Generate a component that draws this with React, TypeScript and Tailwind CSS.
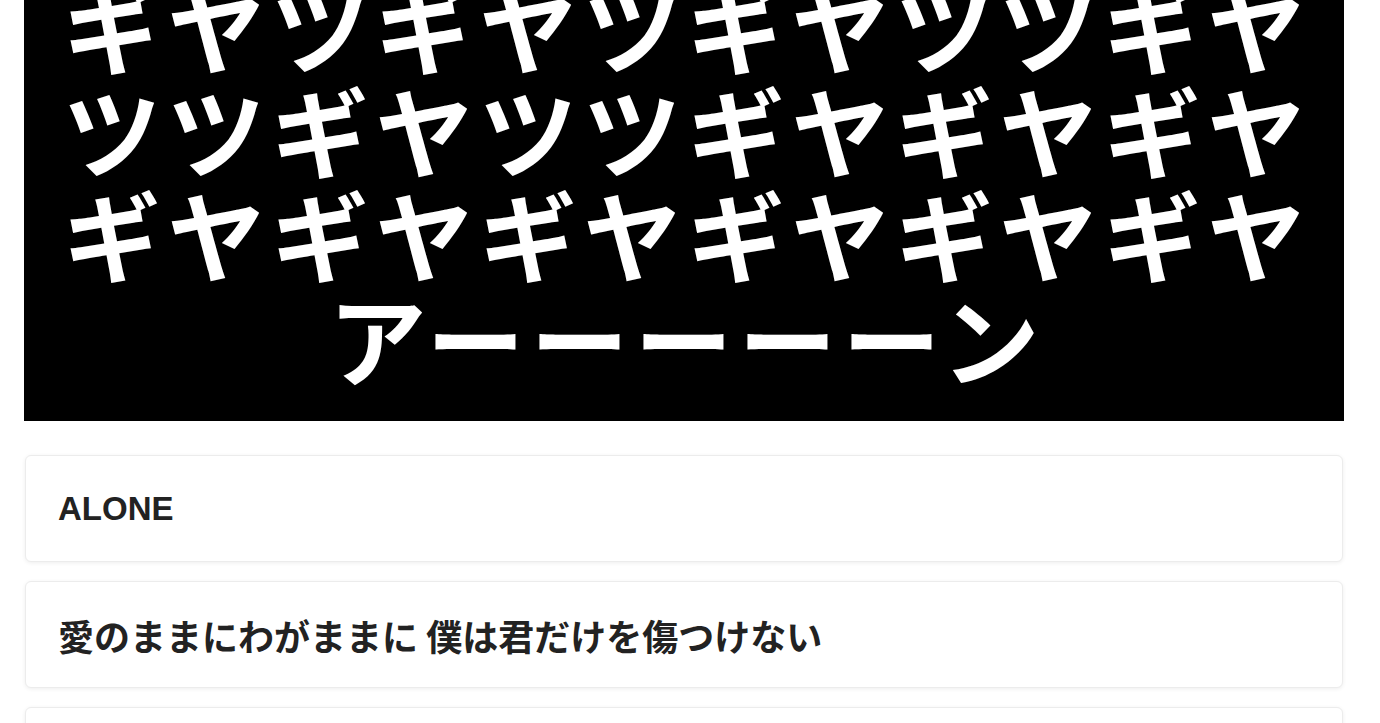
import React from "react";

const rows = [
  "ギヤツギヤツギヤツツギヤ",
  "ツツギヤツツギヤギヤギヤ",
  "ギヤギヤギヤギヤギヤギヤ",
  "アーーーーーン",
];

export default function App() {
  return (
    <div className="min-h-screen bg-white pl-6 pr-9">
      <div className="h-[421px] overflow-hidden bg-black flex flex-col justify-end items-center pb-[33px] pl-[6px]">
        {rows.map((r, i) => (
          <div
            key={i}
            className="text-white font-semibold text-[98px] leading-[104px] tracking-[6px] whitespace-nowrap"
            style={{ fontFamily: '"Noto Sans CJK JP", sans-serif' }}
          >
            {r}
          </div>
        ))}
      </div>
      <div className="flex flex-col gap-[19px] pt-[34px] pb-10 px-px">
        <div className="h-[107px] flex items-center rounded-md border border-[#ececec] bg-white shadow-[0_1px_4px_rgba(0,0,0,0.07)] px-8">
          <span
            className="text-[33px] font-bold text-[#222222]"
            style={{ fontFamily: '"Liberation Sans", Arial, sans-serif' }}
          >
            ALONE
          </span>
        </div>
        <div className="h-[107px] flex items-center rounded-md border border-[#ececec] bg-white shadow-[0_1px_4px_rgba(0,0,0,0.07)] px-8">
          <span
            className="text-[36px] font-bold text-[#222222] whitespace-nowrap"
            style={{ fontFamily: '"Noto Sans CJK JP", sans-serif' }}
          >
            愛のままにわがままに 僕は君だけを傷つけない
          </span>
        </div>
        <div className="h-[107px] flex items-center rounded-md border border-[#ececec] bg-white shadow-[0_1px_4px_rgba(0,0,0,0.07)] px-8">
          <span
            className="text-[36px] font-bold text-[#222222]"
            style={{ fontFamily: '"Noto Sans CJK JP", sans-serif' }}
          >
            &nbsp;
          </span>
        </div>
      </div>
    </div>
  );
}
